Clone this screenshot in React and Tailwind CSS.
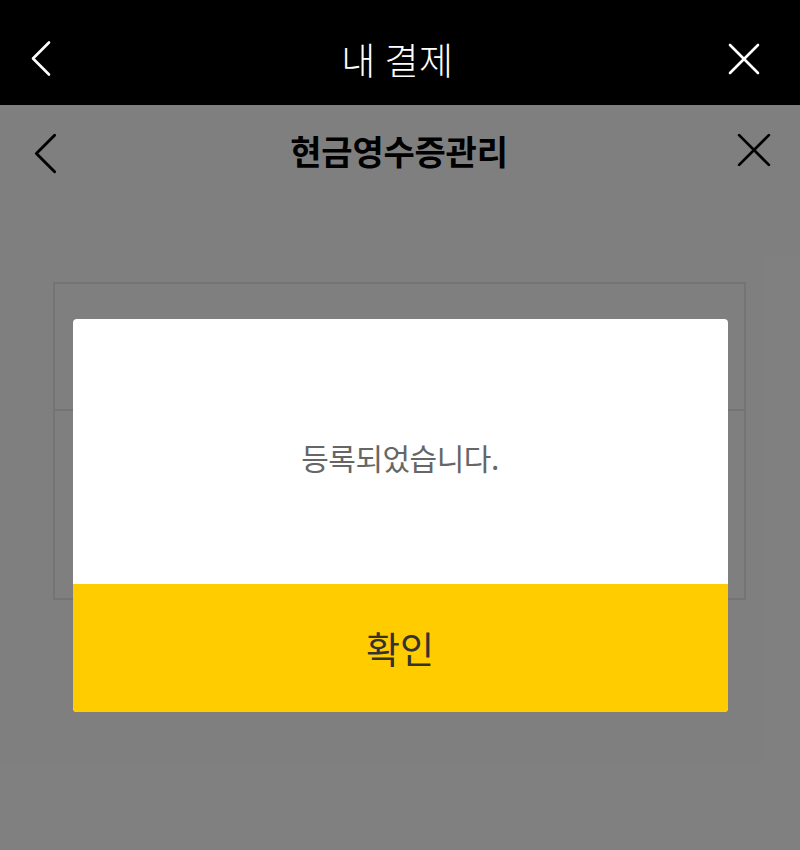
import React from "react";

const font = { fontFamily: '"Noto Sans CJK KR", "Noto Sans", sans-serif' };

function Chevron({ className }) {
  return (
    <svg viewBox="0 0 20 36" className={className} fill="none" stroke="currentColor" strokeWidth="2.6" strokeLinecap="round" strokeLinejoin="round">
      <polyline points="18,2 2,18 18,34" />
    </svg>
  );
}

function Cross({ className }) {
  return (
    <svg viewBox="0 0 32 32" className={className} fill="none" stroke="currentColor" strokeWidth="2.6" strokeLinecap="round">
      <line x1="2" y1="2" x2="30" y2="30" />
      <line x1="30" y1="2" x2="2" y2="30" />
    </svg>
  );
}

export default function App() {
  return (
    <div className="w-[800px] h-[850px] flex flex-col overflow-hidden bg-white" style={font}>
      <div className="h-[105px] bg-black flex items-center justify-between px-[31px] pt-[13px] shrink-0">
        <Chevron className="w-[20px] h-[37px] text-white mt-[-2px]" />
        <span className="text-white text-[37px] font-light leading-none ml-[16px] tracking-[0.5px]">내 결제</span>
        <Cross className="w-[32px] h-[32px] text-white mr-[9px]" />
      </div>
      <div className="relative flex-1 flex flex-col">
        <div className="h-[96px] flex items-center justify-between pl-[33px] pr-[28px] shrink-0">
          <Chevron className="w-[25px] h-[41px] text-black" />
          <span className="text-black text-[34px] font-bold leading-none tracking-[-0.2px] mt-[-4px] ml-[4px]">현금영수증관리</span>
          <Cross className="w-[36px] h-[34px] text-black mt-[-6px]" />
        </div>
        <div className="mt-[81px] ml-[53px] mr-[54px] h-[318px] border-2 border-[#e9e9e9] flex flex-col">
          <div className="h-[127px] border-b-2 border-[#e9e9e9]" />
          <div className="flex-1" />
        </div>
        <div className="absolute inset-0 bg-black/50 flex justify-center">
          <div className="mt-[214px] w-[655px] h-[393px] rounded-[4px] overflow-hidden flex flex-col bg-white">
            <div className="h-[265px] flex items-center justify-center pt-[10px]">
              <span className="text-[#666666] text-[30px] leading-none tracking-[-0.5px]">등록되었습니다.</span>
            </div>
            <div className="flex-1 bg-[#ffcc00] flex items-center justify-center">
              <span className="text-[#333333] text-[37px] leading-none">확인</span>
            </div>
          </div>
        </div>
      </div>
    </div>
  );
}
